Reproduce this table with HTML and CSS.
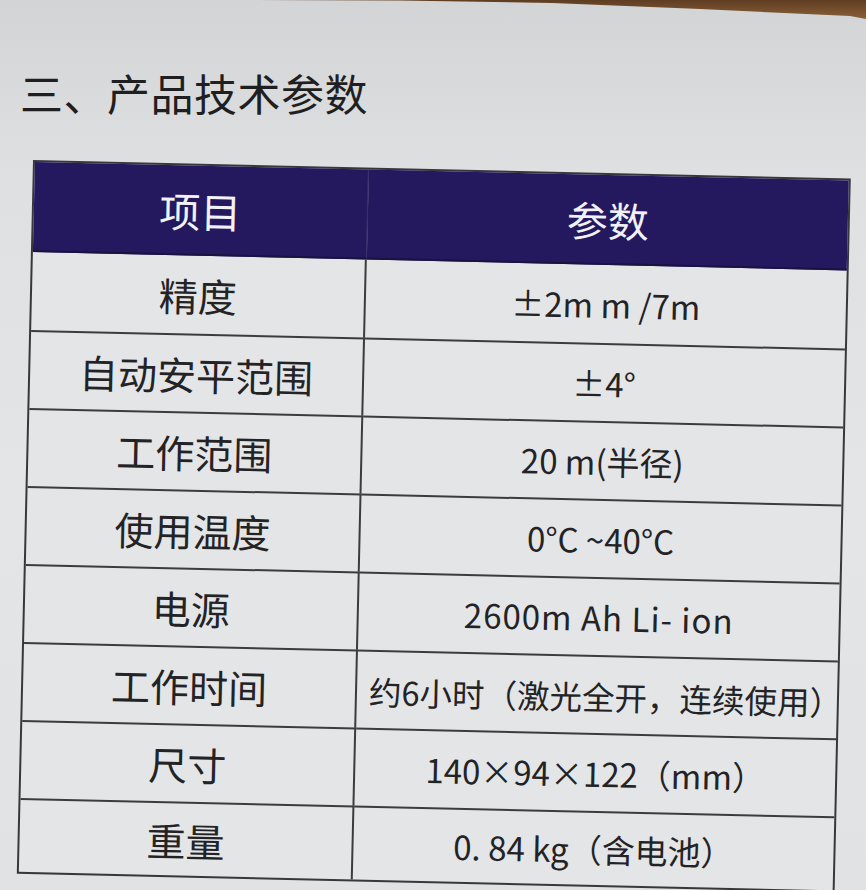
FILE: index.html
```html
<!DOCTYPE html>
<html lang="zh-CN">
<head>
<meta charset="utf-8">
<title>产品技术参数</title>
<link rel="stylesheet" href="styles.css">
</head>
<body>
<svg class="edge" width="866" height="24" viewBox="0 0 866 24" aria-hidden="true">
  <defs>
    <linearGradient id="wood" x1="0" y1="0" x2="0" y2="1">
      <stop offset="0" stop-color="#5e3d22"/>
      <stop offset="1" stop-color="#8b6038"/>
    </linearGradient>
  </defs>
  <polygon points="236,0 866,0 866,19 850,16 700,9 552,3 400,0.5" fill="url(#wood)"/>
</svg>
<main class="page">
  <h1 class="title">三、产品技术参数</h1>
  <div class="spec">
    <div class="head">项目</div>
    <div class="head">参数</div>

    <div class="key">精度</div>
    <div class="val">±2m m /7m</div>

    <div class="key">自动安平范围</div>
    <div class="val">±4°</div>

    <div class="key">工作范围</div>
    <div class="val">20 m(半径)</div>

    <div class="key">使用温度</div>
    <div class="val">0°C ~40°C</div>

    <div class="key">电源</div>
    <div class="val spaced">2600m Ah Li- ion</div>

    <div class="key">工作时间</div>
    <div class="val long">约6小时（激光全开，连续使用）</div>

    <div class="key">尺寸</div>
    <div class="val">140×94×122（mm）</div>

    <div class="key">重量</div>
    <div class="val">0. 84 kg（含电池）</div>
  </div>
</main>
</body>
</html>
```

FILE: styles.css
```css
html, body {
  margin: 0;
  padding: 0;
}

body {
  width: 866px;
  height: 890px;
  overflow: hidden;
  position: relative;
  background: linear-gradient(180deg, #d3d4d6 0%, #dfe0e2 20%, #e3e5e7 55%, #e0e2e4 100%);
  font-family: "Noto Sans CJK SC", "Noto Sans", sans-serif;
  color: #1d1d1f;
}

.edge {
  position: absolute;
  left: 0;
  top: 0;
  display: block;
}

.page {
  padding: 68px 0 0 0;
}

.title {
  margin: 0 0 0 20px;
  font-size: 43px;
  line-height: 48px;
  font-weight: 400;
  color: #1f1f22;
  letter-spacing: 0.5px;
}

.spec {
  margin: 44px 0 0 33px;
  width: 818px;
  display: grid;
  grid-template-columns: 334px minmax(0, 1fr);
  grid-template-rows: 90px repeat(7, 78px) 74px;
  border: 2px solid #38383c;
  box-sizing: border-box;
  transform: rotate(1.3deg);
  transform-origin: 0 0;
  background: #e4e5e7;
}

.head {
  background: #24195f;
  color: #f1f1f6;
  font-size: 41px;
  font-weight: 400;
  display: flex;
  align-items: center;
  justify-content: center;
  border-bottom: 2px solid #1a1240;
}

.head:first-child {
  border-right: 1px solid #3b3370;
}

.key,
.val {
  display: flex;
  align-items: center;
  justify-content: center;
  border-top: 2px solid #3c3c40;
  white-space: nowrap;
  font-weight: 400;
  color: #232326;
  min-width: 0;
}

.key {
  font-size: 39px;
  border-right: 2px solid #3c3c40;
}

.val {
  font-size: 33px;
}

.val.long {
  justify-content: flex-start;
  padding-left: 12px;
  font-size: 32.5px;
}

.spaced {
  letter-spacing: 1px;
}

.spec > .key:nth-child(3),
.spec > .val:nth-child(4) {
  border-top: none;
}
```
